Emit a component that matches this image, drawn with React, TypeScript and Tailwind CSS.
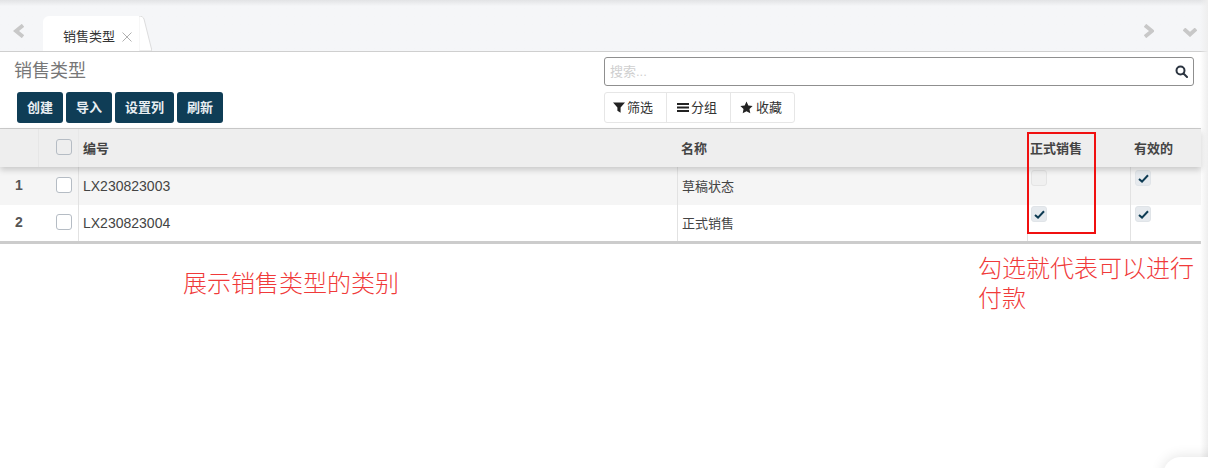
const font = { fontFamily: '"Liberation Sans", "Noto Sans CJK SC", sans-serif' };

function Funnel() {
  return (
    <svg width="12" height="11" viewBox="0 0 12 11" fill="#222">
      <path d="M0 0.5h12L7.6 5.4v5.4L4.4 8.8V5.4z" />
    </svg>
  );
}
function Bars() {
  return (
    <svg width="12" height="11" viewBox="0 0 12 11" fill="#222">
      <rect x="0" y="1" width="12" height="2" />
      <rect x="0" y="4.5" width="12" height="2" />
      <rect x="0" y="8" width="12" height="2" />
    </svg>
  );
}
function Star() {
  return (
    <svg width="13" height="13" viewBox="0 0 24 24" fill="#222">
      <path d="M12 1l3.4 7.3 7.9 1-5.8 5.5 1.5 7.9L12 18.8l-7 3.9 1.5-7.9L.7 9.3l7.9-1z" />
    </svg>
  );
}
function Search() {
  return (
    <svg width="13" height="13" viewBox="0 0 13 13" fill="none" stroke="#2b3440" strokeWidth="2">
      <circle cx="5.5" cy="5.5" r="4" />
      <path d="M8.5 8.5l3.5 3.5" strokeLinecap="round" />
    </svg>
  );
}
function Chevron({ d, w, h }: { d: string; w: number; h: number }) {
  return (
    <svg width={w} height={h} viewBox={`0 0 ${w} ${h}`} fill="none" stroke="#c8c8c8" strokeWidth="3.8">
      <path d={d} />
    </svg>
  );
}
function Box({ checked, faded }: { checked?: boolean; faded?: boolean }) {
  return (
    <span
      className={`flex h-[16px] w-[16px] items-center justify-center rounded-[3px] border ${
        checked ? "border-[#e0e4e8] bg-[#e6eaee]" : faded ? "border-[#e4e4e4] bg-[#f0f0f0]" : "border-[#b5bcc4] bg-white"
      }`}
    >
      {checked && (
        <svg width="11" height="9" viewBox="0 0 11 9" fill="none" stroke="#0d3b53" strokeWidth="2">
          <path d="M1 5l3 2.6L10 1.2" />
        </svg>
      )}
    </span>
  );
}
function Btn({ children, w }: { children: string; w: string }) {
  return (
    <button className={`h-[31px] rounded-[3px] bg-[#0f3d56] text-[13px] font-bold text-[#e8eef2] ${w}`}>{children}</button>
  );
}
function Row({ n, code, name, a, b, bg, h, pt }: { n: string; code: string; name: string; a: boolean; b: boolean; bg: string; h: string; pt: string }) {
  return (
    <div className={`flex items-stretch text-[#444] ${bg} ${h}`}>
      <div className="flex w-[39px] items-center pb-[2px] pl-[15px] text-[14px] font-bold text-[#555]">{n}</div>
      <div className="flex w-[40px] items-center border-r border-[#e2e2e2] pb-[2px] pl-[17px]">
        <Box />
      </div>
      <div className="flex w-[599px] items-center border-r border-[#e2e2e2] pl-[4px] pt-[1px] text-[14px]">{code}</div>
      <div className="flex w-[350px] items-center border-r border-[#e2e2e2] pl-[4px] pt-[2px] text-[13px]">{name}</div>
      <div className={`w-[103px] border-r border-[#e2e2e2] pl-[3px] ${pt}`}>
        <Box checked={a} faded={!a} />
      </div>
      <div className={`w-[70px] pl-[4px] ${pt}`}>
        <Box checked={b} />
      </div>
    </div>
  );
}

export default function App() {
  return (
    <div className="relative h-[468px] w-[1208px] overflow-hidden bg-white" style={font}>
      <div className="flex h-[52px] items-start border-b border-[#cfcfcf] bg-gradient-to-b from-[#e2e3e5] via-[#f5f6f8] via-[12%] to-[#f5f6f8]">
        <div className="ml-[13px] mt-[24px] h-[14px]">
          <Chevron d="M10 1.3L3 7l7 5.7" w={11} h={14} />
        </div>
        <div className="relative ml-[19px] mt-[16px] flex h-[35px] w-[109px]">
          <div className="flex h-[35px] w-[100px] items-center rounded-tl-[6px] bg-white pl-[20px] pt-[6px] text-[13px] text-[#333]">
            <span>销售类型</span>
            <svg className="ml-[7px]" width="10" height="10" viewBox="0 0 10 10" fill="none" stroke="#b0b0b0" strokeWidth="1">
              <path d="M0.5 0.5l9 9M9.5 0.5l-9 9" />
            </svg>
          </div>
          <svg className="absolute left-[96px] top-0" width="13" height="35" viewBox="0 0 13 35">
            <path d="M0 0C3 0 4 1 5 3L13 35H0z" fill="#fff" stroke="#d4d4d4" strokeWidth="0.8" />
            <path d="M0 0.5V35" stroke="#fff" strokeWidth="1" />
          </svg>
        </div>
        <div className="ml-auto mr-[29px] mt-[24px] h-[14px]">
          <Chevron d="M1 1.3L8 7l-7 5.7" w={10} h={14} />
        </div>
        <div className="mr-[11px] mt-[28px] h-[9px]">
          <Chevron d="M1 1l6 5.5L13 1" w={14} h={9} />
        </div>
      </div>

      <div className="flex h-[76px]">
        <div className="w-[604px] pl-[14px]">
          <div className="flex h-[40px] items-center pb-[2px] text-[18px] leading-none text-[#777]">销售类型</div>
          <div className="flex gap-[3px] pl-[3px]">
            <Btn w="w-[46px]">创建</Btn>
            <Btn w="w-[46px]">导入</Btn>
            <Btn w="w-[59px]">设置列</Btn>
            <Btn w="w-[46px]">刷新</Btn>
          </div>
        </div>
        <div className="w-[590px] pt-[5px]">
          <div className="flex h-[29px] items-center justify-between rounded-[3px] border border-[#8f8f8f] pl-[5px] pr-[5px] text-[13px] text-[#cfcfcf]">
            <span>搜索...</span>
            <Search />
          </div>
          <div className="mt-[6px] flex h-[31px] w-[191px] rounded-[3px] border border-[#e6e6e6] text-[13px] text-[#333]">
            <div className="flex w-[62px] items-center gap-[2px] border-r border-[#e6e6e6] pl-[8px]"><Funnel />筛选</div>
            <div className="flex w-[64px] items-center gap-[2px] border-r border-[#e6e6e6] pl-[10px]"><Bars />分组</div>
            <div className="flex flex-1 items-center gap-[3px] pl-[9px]"><Star />收藏</div>
          </div>
        </div>
      </div>

      <div className="w-[1201px] border-t border-[#cccccc]">
        <div className="relative z-10 flex h-[38px] items-stretch bg-[#eeeeee] text-[13px] font-bold text-[#444] shadow-[0_3px_6px_rgba(0,0,0,0.18)]">
          <div className="w-[39px] border-r border-[#e6e6e6]" />
          <div className="flex w-[40px] items-center border-r border-[#e8e8e8] pb-[2px] pl-[17px]">
            <span className="h-[16px] w-[16px] rounded-[3px] border border-[#b5bcc4]" />
          </div>
          <div className="flex w-[599px] items-center pl-[4px] pt-[1px]">编号</div>
          <div className="flex w-[350px] items-center pl-[3px] pt-[1px]">名称</div>
          <div className="flex w-[103px] items-center pl-[2px] pt-[1px]">正式销售</div>
          <div className="flex w-[70px] items-center pl-[3px] pt-[1px]">有效的</div>
        </div>
        <Row n="1" code="LX230823003" name="草稿状态" a={false} b={true} bg="bg-[#f5f5f5]" h="h-[38px]" pt="pt-[3px]" />
        <Row n="2" code="LX230823004" name="正式销售" a={true} b={true} bg="bg-white" h="h-[36px]" pt="pt-[1px]" />
        <div className="h-[3px] bg-[#cccccc]" />
      </div>

      <div className="absolute left-[1027px] top-[132px] z-20 h-[102px] w-[69px] border-2 border-[#f01010]" />
      <div className="absolute left-[183px] top-[267px] text-[24px] leading-[30px] text-[#f03a3a]" style={{ fontFamily: '"Noto Sans CJK SC", sans-serif', fontWeight: 300 }}>
        展示销售类型的类别
      </div>
      <div className="absolute left-[978px] top-[252px] w-[220px] text-[24px] leading-[30px] text-[#f03a3a]" style={{ fontFamily: '"Noto Sans CJK SC", sans-serif', fontWeight: 300 }}>
        勾选就代表可以进行付款
      </div>
      <div className="pointer-events-none absolute right-0 top-0 h-full w-[8px] bg-gradient-to-r from-transparent to-[#eeeeee]" />
      <div className="absolute left-[1163px] top-[457px] h-[40px] w-[80px] rounded-tl-[18px] bg-white shadow-[0_0_14px_rgba(0,0,0,0.12)]" />
    </div>
  );
}
